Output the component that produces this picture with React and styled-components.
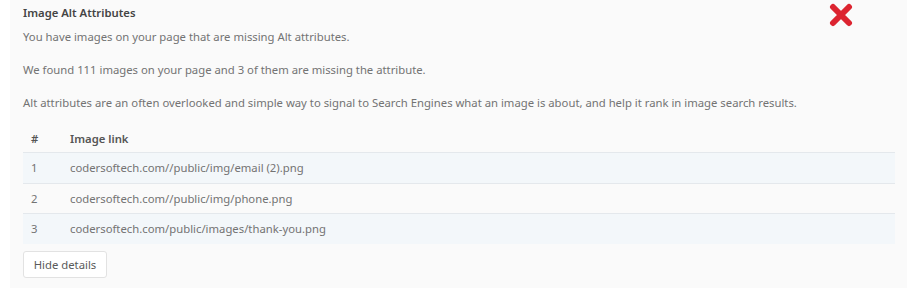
import React from "react";
import styled, { createGlobalStyle } from "styled-components";

const GlobalStyle = createGlobalStyle`
  html, body {
    margin: 0;
    padding: 0;
    background: #ffffff;
  }
  body {
    font-family: "Noto Sans", "Open Sans", sans-serif;
  }
`;

const Panel = styled.section`
  position: relative;
  box-sizing: border-box;
  margin-left: 10px;
  width: 897px;
  height: 288px;
  background-color: #fafafa;
  padding: 4px 12px 0 13px;
  color: #737373;
  font-size: 11.3px;
`;

const Title = styled.h3`
  margin: 0;
  font-size: 11.3px;
  font-weight: 600;
  color: #444;
  line-height: 18px;
`;

const Text = styled.p`
  margin: ${(props) => (props.$first ? "6px" : "15px")} 0 0;
  line-height: 18px;
`;

const Cross = styled.svg`
  position: absolute;
  top: 3px;
  right: 54px;
`;

const Table = styled.table`
  width: 872px;
  table-layout: fixed;
  border-collapse: collapse;
  margin-top: 12px;
`;

const Th = styled.th`
  text-align: left;
  font-weight: 600;
  color: #555;
  height: 28px;
  padding: 0 8px;
  width: ${(props) => props.$w || "auto"};
`;

const Row = styled.tr`
  background-color: ${(props) => (props.$striped ? "#f3f7fa" : "transparent")};
  border-top: 1px solid #e4e8ec;
`;

const Td = styled.td`
  height: 29.5px;
  padding: 0 8px;
  color: #737373;
`;

const Button = styled.button`
  display: block;
  margin-top: 7px;
  box-sizing: border-box;
  width: 84px;
  height: 27px;
  background: #fff;
  border: 1px solid #e2e2e2;
  border-radius: 3px;
  font-family: inherit;
  font-size: 11.3px;
  color: #5a5a5a;
  padding: 0;
  cursor: pointer;
`;

const links = [
  "codersoftech.com//public/img/email (2).png",
  "codersoftech.com//public/img/phone.png",
  "codersoftech.com/public/images/thank-you.png",
];

const App = () => (
  <>
    <GlobalStyle />
    <Panel>
      <Cross width="24" height="24" viewBox="0 0 24 24">
        <path
          d="M4 4 L20 20 M20 4 L4 20"
          stroke="#dc2430"
          strokeWidth="6"
          strokeLinecap="round"
          fill="none"
        />
      </Cross>
      <Title>Image Alt Attributes</Title>
      <Text $first>You have images on your page that are missing Alt attributes.</Text>
      <Text>We found 111 images on your page and 3 of them are missing the attribute.</Text>
      <Text>
        Alt attributes are an often overlooked and simple way to signal to Search
        Engines what an image is about, and help it rank in image search results.
      </Text>
      <Table>
        <thead>
          <tr>
            <Th $w="23px">#</Th>
            <Th>Image link</Th>
          </tr>
        </thead>
        <tbody>
          {links.map((link, i) => (
            <Row key={link} $striped={i % 2 === 0}>
              <Td>{i + 1}</Td>
              <Td>{link}</Td>
            </Row>
          ))}
        </tbody>
      </Table>
      <Button>Hide details</Button>
    </Panel>
  </>
);

export default App;
